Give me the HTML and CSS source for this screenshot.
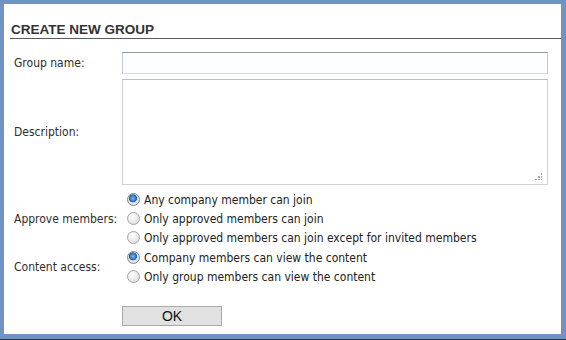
FILE: index.html
```html
<!DOCTYPE html>
<html lang="en">
<head>
    <meta charset="UTF-8">
    <title>Create new group</title>
    <link rel="stylesheet" href="styles.css">
</head>
<body>
    <div class="window">
        <h2 class="title">CREATE NEW GROUP</h2>

        <form class="group-form">
            <!-- name -->
            <div class="row">
                <label class="label" for="groupName">Group name:</label>
                <input type="text" class="text-input" id="groupName" name="name">
            </div>

            <!-- description -->
            <div class="row row-desc">
                <label class="label" for="groupDesc">Description:</label>
                <div class="area-wrap">
                    <textarea class="text-area" id="groupDesc" name="description"></textarea>
                    <span class="grip"></span>
                </div>
            </div>

            <!-- approval -->
            <div class="row row-radios">
                <span class="label">Approve members:</span>
                <div class="options">
                    <label class="option"><input type="radio" name="approve" checked> Any company member can join</label>
                    <label class="option"><input type="radio" name="approve"> Only approved members can join</label>
                    <label class="option"><input type="radio" name="approve"> Only approved members can join except for invited members</label>
                </div>
            </div>

            <!-- access -->
            <div class="row row-radios row-access">
                <span class="label">Content access:</span>
                <div class="options">
                    <label class="option"><input type="radio" name="access" checked> Company members can view the content</label>
                    <label class="option"><input type="radio" name="access"> Only group members can view the content</label>
                </div>
            </div>

            <div class="row row-submit">
                <span class="label"></span>
                <button type="submit" class="btn-ok">OK</button>
            </div>
        </form>
    </div>
</body>
</html>
```

FILE: styles.css
```css
body {
    margin: 0;
    background: #2f3338;
}
.window {
    box-sizing: border-box;
    height: 339px;
    background: #fff;
    border: solid #7093c3;
    border-width: 4px 5px 5px 4px;
    padding-top: 18px;
}
.title {
    margin: 0 0 0 6px;
    padding-left: 1px;
    font-family: "Liberation Sans", Arial, sans-serif;
    font-size: 13.5px;
    line-height: 16px;
    font-weight: bold;
    color: #333;
    border-bottom: 1px solid #5a5a5a;
}
.group-form {
    padding: 13px 13px 0 10px;
    font-family: "DejaVu Sans Condensed", "DejaVu Sans", sans-serif;
    font-size: 12px;
    color: #333;
}
.row {
    display: grid;
    grid-template-columns: 108px 426px;
    align-items: center;
}
.row-desc {
    margin-top: 5px;
}
.row-radios {
    margin-top: 5px;
}
.row-access {
    margin-top: 1px;
}
.row-submit {
    margin-top: 20px;
}
.label {
    color: #2e2e2e;
}
.text-input {
    box-sizing: border-box;
    width: 426px;
    height: 22px;
    margin: 0;
    border: 1px solid;
    border-color: #8e99a6 #c3cad3 #d3d9e0 #c3cad3;
    background: #fcfeff;
    outline: none;
}
.area-wrap {
    position: relative;
    height: 106px;
}
.text-area {
    box-sizing: border-box;
    display: block;
    width: 426px;
    height: 106px;
    margin: 0;
    border: 1px solid #d0d0d0;
    border-top-color: #bdbdbd;
    background: #fff;
    resize: none;
    outline: none;
}
.grip {
    position: absolute;
    right: 6px;
    bottom: 5px;
    width: 7px;
    height: 7px;
    background:
        radial-gradient(circle, #a9a9a9 0.8px, transparent 1px) 6px 0 / 2px 2px no-repeat,
        radial-gradient(circle, #a9a9a9 0.8px, transparent 1px) 3px 3px / 2px 2px no-repeat,
        radial-gradient(circle, #a9a9a9 0.8px, transparent 1px) 6px 3px / 2px 2px no-repeat,
        radial-gradient(circle, #a9a9a9 0.8px, transparent 1px) 0 6px / 2px 2px no-repeat,
        radial-gradient(circle, #a9a9a9 0.8px, transparent 1px) 3px 6px / 2px 2px no-repeat,
        radial-gradient(circle, #a9a9a9 0.8px, transparent 1px) 6px 6px / 2px 2px no-repeat;
}
.options {
    display: flex;
    flex-direction: column;
}
.option {
    display: flex;
    align-items: center;
    height: 19px;
    color: #222;
    white-space: nowrap;
}
.option input {
    appearance: none;
    -webkit-appearance: none;
    box-sizing: border-box;
    width: 13px;
    height: 13px;
    margin: 0 4px 0 5px;
    border: 1px solid #a3a3a3;
    border-radius: 50%;
    background: radial-gradient(circle at 40% 35%, #ffffff 0%, #e6e6e6 60%, #d2d2d2 100%);
}
.option input:checked {
    border-color: #7a8796;
    background:
        radial-gradient(circle at 45% 40%, #7fbdf0 0%, #1f5fa8 42%, transparent 48%),
        radial-gradient(circle, #f2f2f2 0%, #d8d8d8 100%);
}
.btn-ok {
    box-sizing: border-box;
    width: 100px;
    height: 20px;
    margin: 0;
    padding: 0;
    border: 1px solid #a9a9a9;
    background: #e1e1e1;
    font-family: "Liberation Sans", Arial, sans-serif;
    font-size: 14px;
    color: #111;
}
```
